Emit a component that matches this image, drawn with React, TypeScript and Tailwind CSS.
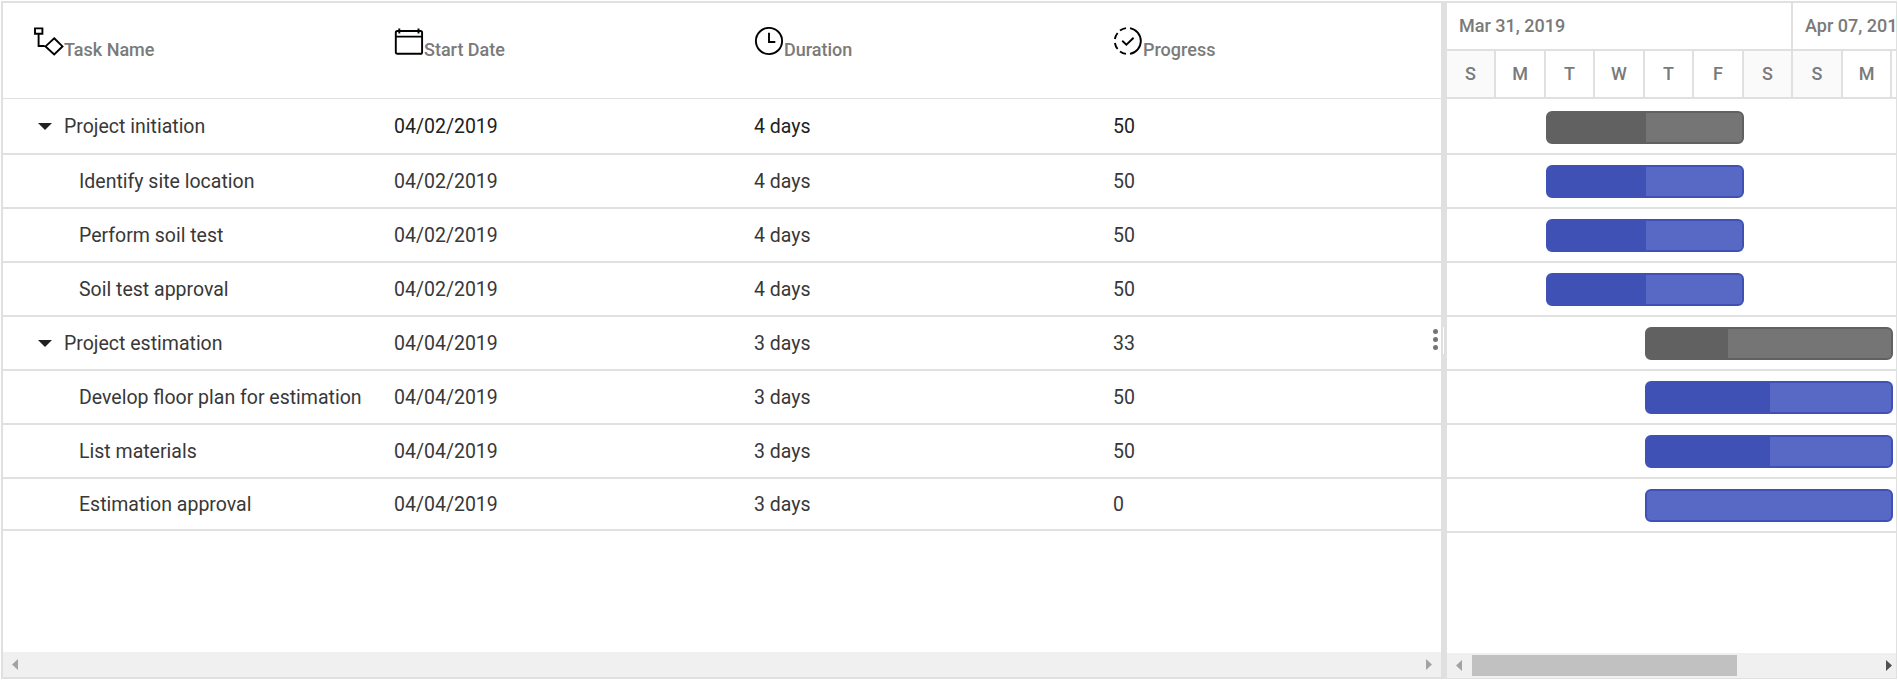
import type { ReactNode } from "react";

type Task = {
  name: string;
  start: string;
  duration: string;
  progress: number;
  parent?: boolean;
  offset: number;
  width: number;
  done: number;
};

const tasks: Task[] = [
  { name: "Project initiation", start: "04/02/2019", duration: "4 days", progress: 50, parent: true, offset: 99, width: 198, done: 98 },
  { name: "Identify site location", start: "04/02/2019", duration: "4 days", progress: 50, offset: 99, width: 198, done: 98 },
  { name: "Perform soil test", start: "04/02/2019", duration: "4 days", progress: 50, offset: 99, width: 198, done: 98 },
  { name: "Soil test approval", start: "04/02/2019", duration: "4 days", progress: 50, offset: 99, width: 198, done: 98 },
  { name: "Project estimation", start: "04/04/2019", duration: "3 days", progress: 33, parent: true, offset: 198, width: 248, done: 81 },
  { name: "Develop floor plan for estimation", start: "04/04/2019", duration: "3 days", progress: 50, offset: 198, width: 248, done: 123 },
  { name: "List materials", start: "04/04/2019", duration: "3 days", progress: 50, offset: 198, width: 248, done: 123 },
  { name: "Estimation approval", start: "04/04/2019", duration: "3 days", progress: 0, offset: 198, width: 248, done: 0 },
];

const days = ["S", "M", "T", "W", "T", "F", "S", "S", "M", ""];

function TaskIcon() {
  return (
    <svg className="size-[30px] shrink-0" viewBox="0 0 30 30" fill="none" stroke="#000" strokeWidth="1.9">
      <path d="M1 1.4h7.4v5.4H1zM4.6 6.8V19h6M20.2 11.2l8.3 8.2-8.3 8.1-8.7-8.1z" />
    </svg>
  );
}

function CalendarIcon() {
  return (
    <svg className="size-[30px] shrink-0" viewBox="0 0 30 30" fill="none" stroke="#000" strokeWidth="1.9">
      <rect x="1.8" y="4" width="26.3" height="22.8" rx="1.6" />
      <path d="M1.8 9.6h26.3M5.3 1.6v4.8M24.5 1.6v4.8" />
    </svg>
  );
}

function ClockIcon() {
  return (
    <svg className="size-[30px] shrink-0" viewBox="0 0 30 30" fill="none" stroke="#000" strokeWidth="1.9">
      <circle cx="15" cy="14" r="13.1" />
      <path d="M15 5.8V15h6.3" />
    </svg>
  );
}

function ProgressIcon() {
  return (
    <svg className="size-[30px] shrink-0" viewBox="0 0 30 30" fill="none" stroke="#000" strokeWidth="1.9">
      <path d="M17 1.1a13.1 13.1 0 0 1 0 25.8M7 3.6a13.1 13.1 0 0 1 6-2.5M1.9 12a13.1 13.1 0 0 1 2.7-6M1.9 16a13.1 13.1 0 0 0 2.7 6M7 24.4a13.1 13.1 0 0 0 6 2.5" />
      <path d="M9.2 13.7l4.2 3.9 7.2-6.8" />
    </svg>
  );
}

function HeaderCell({ icon, label, className }: { icon: ReactNode; label: string; className: string }) {
  return (
    <div className={`flex shrink-0 pt-6 ${className}`}>
      {icon}
      <span className="pt-[11px] text-[18px] leading-6">{label}</span>
    </div>
  );
}

function Arrow({ dir, className }: { dir: "left" | "right"; className: string }) {
  return (
    <svg className={`h-[11px] w-1.5 ${className}`} viewBox="0 0 6 11">
      <path d={dir === "left" ? "M6 0v11L0 5.5z" : "M0 0v11l6-5.5z"} fill="currentColor" />
    </svg>
  );
}

function Grid() {
  return (
    <section className="flex w-[1438px] shrink-0 flex-col">
      <header className="flex h-24 shrink-0 border-b border-[#e0e0e0] pl-[30px] font-medium text-[#7a7a7a]">
        <HeaderCell icon={<TaskIcon />} label="Task Name" className="w-[360px] pl-px" />
        <HeaderCell icon={<CalendarIcon />} label="Start Date" className="w-[360px] pl-px" />
        <HeaderCell icon={<ClockIcon />} label="Duration" className="w-[359px] pl-px" />
        <HeaderCell icon={<ProgressIcon />} label="Progress" className="w-[300px] pl-px" />
      </header>
      <div className="flex-1 text-[19.5px]">
        {tasks.map((t, i) => (
          <div
            key={t.name}
            className={`flex items-center border-b-2 border-[#e0e0e0] pt-0.5 ${i === 0 ? "h-14 text-[#212121]" : i === 7 ? "h-[52px] text-[#383838]" : "h-[54px] text-[#383838]"}`}
          >
            <div className={`flex w-[391px] items-center text-[#383838] ${t.parent ? "pl-[34.5px]" : "pl-[76px]"}`}>
              {t.parent && (
                <svg className="mr-[12.5px] mb-0.5 h-[7px] w-3.5" viewBox="0 0 14 7">
                  <path d="M0 0h14L7 7z" fill="#212121" />
                </svg>
              )}
              {t.name}
            </div>
            <div className="w-[360px]">{t.start}</div>
            <div className="w-[359px]">{t.duration}</div>
            <div>{t.progress}</div>
          </div>
        ))}
      </div>
      <div className="flex h-[25px] shrink-0 items-center justify-between bg-[#f0f0f0] px-[9px] text-[#a3a3a3]">
        <Arrow dir="left" className="" />
        <Arrow dir="right" className="" />
      </div>
    </section>
  );
}

function Chart() {
  return (
    <section className="flex min-w-0 flex-1 flex-col overflow-hidden border-r border-[#e0e0e0]">
      <div className="flex h-12 shrink-0 border-b-2 border-[#e0e0e0] text-[18px] font-medium whitespace-nowrap text-[#7a7a7a]">
        <div className="flex w-[346px] shrink-0 items-center border-r-2 border-[#e0e0e0] pb-0.5 pl-3">Mar 31, 2019</div>
        <div className="flex w-[346px] shrink-0 items-center pb-0.5 pl-3">Apr 07, 2019</div>
      </div>
      <div className="-ml-[0.25px] flex h-12 shrink-0 border-b-2 border-[#e0e0e0] text-[18px] font-medium text-[#7a7a7a]">
        {days.map((d, i) => (
          <div
            key={i}
            className={`flex w-[49.5px] shrink-0 items-center justify-center border-r-2 border-[#e0e0e0] pb-0.5 ${d === "S" ? "bg-[#fafafa]" : ""}`}
          >
            {d}
          </div>
        ))}
      </div>
      <div className="flex-1">
        {tasks.map((t, i) => (
          <div key={t.name} className={`border-b-2 border-[#e0e0e0] ${i === 0 ? "h-14 pt-3" : "h-[54px] pt-2.5"}`}>
            <div
              className={`h-[33px] overflow-hidden rounded-[6px] border-2 ${t.parent ? "border-[#616161] bg-[#757575]" : "border-[#3f51b5] bg-[#5869c5]"}`}
              style={{ marginLeft: t.offset, width: t.width }}
            >
              <div className={`h-full ${t.parent ? "bg-[#616161]" : "bg-[#3f51b5]"}`} style={{ width: t.done }} />
            </div>
          </div>
        ))}
      </div>
      <div className="flex h-[25px] shrink-0 items-center bg-[#f0f0f0] pl-[9px]">
        <Arrow dir="left" className="text-[#a3a3a3]" />
        <div className="ml-2.5 h-[21px] w-[265px] bg-[#c1c1c1]" />
        <Arrow dir="right" className="mr-1 ml-auto text-[#505050]" />
      </div>
      <div className="h-px shrink-0 bg-[#e0e0e0]" />
    </section>
  );
}

export default function App() {
  return (
    <div className="h-[680px] w-[1898px] overflow-hidden bg-white pt-px pl-px font-['Roboto',sans-serif]">
      <div className="flex h-[678px] w-[1896px] border-t-2 border-l-2 border-[#e0e0e0]">
        <div className="flex flex-col">
          <div className="flex min-h-0 flex-1">
            <Grid />
          </div>
          <div className="h-0.5 bg-[#e0e0e0]" />
        </div>
        <div className="relative w-1.5 shrink-0 bg-[#e0e0e0]">
          <div className="absolute top-[324px] left-0.5 h-[27px] w-px bg-white" />
          <div className="absolute top-[326px] -left-2 flex flex-col gap-[3px]">
            <i className="size-[5px] rounded-full bg-[#757575]" />
            <i className="size-[5px] rounded-full bg-[#757575]" />
            <i className="size-[5px] rounded-full bg-[#757575]" />
          </div>
        </div>
        <Chart />
      </div>
    </div>
  );
}
